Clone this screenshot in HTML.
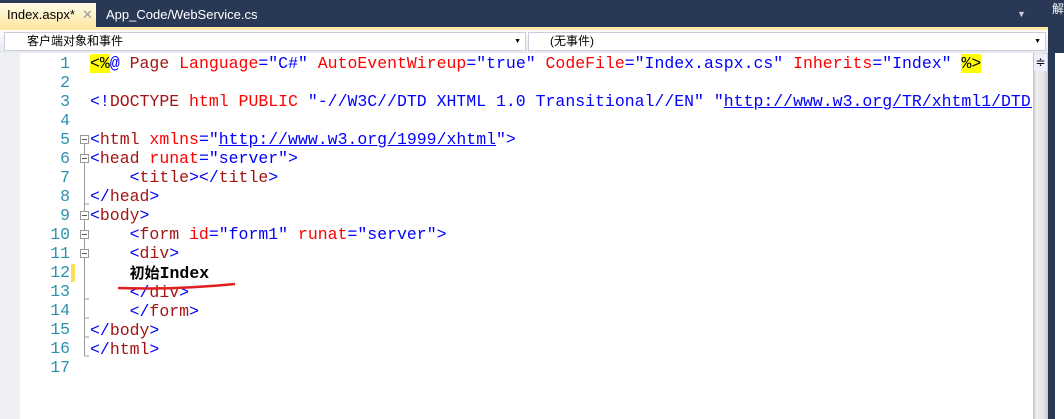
<!DOCTYPE html><html><head><style>
body{margin:0;width:1064px;height:419px;background:#293955;position:relative;overflow:hidden;font-family:"Liberation Sans","Noto Sans CJK SC",sans-serif}
.a{position:absolute}
.code{font-family:"Liberation Mono",monospace;font-size:16.5px;white-space:pre;line-height:19px}
.ln{color:#2b91af;text-align:right;width:70px;left:0}
.b{color:#0000ff}.r{color:#a31515}.re{color:#ff0000}.k{color:#0000ff}.u{color:#0000ff;text-decoration:underline}
.hl{background:#ffff00}
</style></head><body>
<div class="a" style="left:0;top:3px;width:96px;height:24px;background:linear-gradient(#fffbe8,#ffe8a6);font-size:13px;line-height:24px"><span style="padding-left:7px">Index.aspx*</span><span style="position:absolute;left:82px;color:#999">✕</span></div>
<div class="a" style="left:106px;top:3px;color:#fff;font-size:13px;line-height:24px">App_Code/WebService.cs</div>
<div class="a" style="left:1017px;top:9px;color:#ccd;font-size:9px">▼</div>
<div class="a" style="left:0;top:27px;width:1048px;height:3px;background:#ffe8a6"></div>
<div class="a" style="left:0;top:30px;width:1048px;height:23px;background:linear-gradient(#fdfdfe,#e6e9ee)"></div>
<div class="a" style="left:4px;top:32px;width:522px;height:19px;background:#fff;border:1px solid #ccd;box-sizing:border-box;font-size:12px;line-height:17px;padding-left:22px">客户端对象和事件<span style="position:absolute;right:4px;font-size:7px">▼</span></div>
<div class="a" style="left:528px;top:32px;width:518px;height:19px;background:#fff;border:1px solid #ccd;box-sizing:border-box;font-size:12px;line-height:17px;padding-left:21px">(无事件)<span style="position:absolute;right:4px;font-size:7px">▼</span></div>
<div class="a" style="left:0;top:53px;width:1048px;height:366px;background:#fff"></div>
<div class="a" style="left:0;top:53px;width:20px;height:366px;background:#eeeff2"></div>
<div class="a" style="left:1033px;top:53px;width:15px;height:366px;background:linear-gradient(90deg,#bbb,#eee 20%,#e6e6e6 70%,#c8c8c8)"></div>
<div class="a" style="left:1034px;top:54px;width:13px;height:17px;background:#eef;text-align:center;font-size:12px;line-height:17px">≑</div>
<div class="a" style="left:1055px;top:53px;width:9px;height:366px;background:#fff"></div>
<div class="a" style="left:1052px;top:0;color:#fff;font-size:12px">解</div>
<div class="a" style="left:71px;top:264px;width:4px;height:18px;background:#fce05a"></div>
<svg class="a" style="left:0;top:0" width="100" height="419">
<g stroke="#999" fill="#fff" stroke-width="1">
<path d="M84.5 144V356M84.5 356H89M84.5 204H89M84.5 299H89M84.5 318H89M84.5 337H89" fill="none"/>
<rect x="80.5" y="135.5" width="8" height="8"/><rect x="80.5" y="154.5" width="8" height="8"/>
<rect x="80.5" y="211.5" width="8" height="8"/><rect x="80.5" y="230.5" width="8" height="8"/><rect x="80.5" y="249.5" width="8" height="8"/>
<path d="M82 139.5h5M82 158.5h5M82 215.5h5M82 234.5h5M82 253.5h5" stroke="#555"/>
</g></svg>
<div class="a code ln" style="top:54px">1
2
3
4
5
6
7
8
9
10
11
12
13
14
15
16
17</div>
<div class="a code" style="left:90px;top:54px;width:942px;overflow:hidden"><span class="hl">&lt;%</span><span class="b">@</span> <span class="r">Page</span> <span class="re">Language</span><span class="b">="C#"</span> <span class="re">AutoEventWireup</span><span class="b">="true"</span> <span class="re">CodeFile</span><span class="b">="Index.aspx.cs"</span> <span class="re">Inherits</span><span class="b">="Index"</span> <span class="hl">%&gt;</span>

<span class="b">&lt;!</span><span class="r">DOCTYPE</span> <span class="re">html</span> <span class="re">PUBLIC</span> <span class="b">"-//W3C//DTD XHTML 1.0 Transitional//EN"</span> <span class="b">"</span><span class="u">http://www.w3.org/TR/xhtml1/DTD/xhtml1-transitional.dtd</span>

<span class="b">&lt;</span><span class="r">html</span> <span class="re">xmlns</span><span class="b">="</span><span class="u">http://www.w3.org/1999/xhtml</span><span class="b">"&gt;</span>
<span class="b">&lt;</span><span class="r">head</span> <span class="re">runat</span><span class="b">="server"&gt;</span>
    <span class="b">&lt;</span><span class="r">title</span><span class="b">&gt;&lt;/</span><span class="r">title</span><span class="b">&gt;</span>
<span class="b">&lt;/</span><span class="r">head</span><span class="b">&gt;</span>
<span class="b">&lt;</span><span class="r">body</span><span class="b">&gt;</span>
    <span class="b">&lt;</span><span class="r">form</span> <span class="re">id</span><span class="b">="form1"</span> <span class="re">runat</span><span class="b">="server"&gt;</span>
    <span class="b">&lt;</span><span class="r">div</span><span class="b">&gt;</span>
    <b style="font-family:'Noto Sans CJK SC',sans-serif;font-size:15px">初始</b><b>Index</b>
    <span class="b">&lt;/</span><span class="r">div</span><span class="b">&gt;</span>
    <span class="b">&lt;/</span><span class="r">form</span><span class="b">&gt;</span>
<span class="b">&lt;/</span><span class="r">body</span><span class="b">&gt;</span>
<span class="b">&lt;/</span><span class="r">html</span><span class="b">&gt;</span>
</div>
<svg class="a" style="left:115px;top:280px" width="125" height="12"><path d="M3 8 Q60 10 120 4" stroke="#e02020" stroke-width="2.5" fill="none"/></svg>
</body></html>
